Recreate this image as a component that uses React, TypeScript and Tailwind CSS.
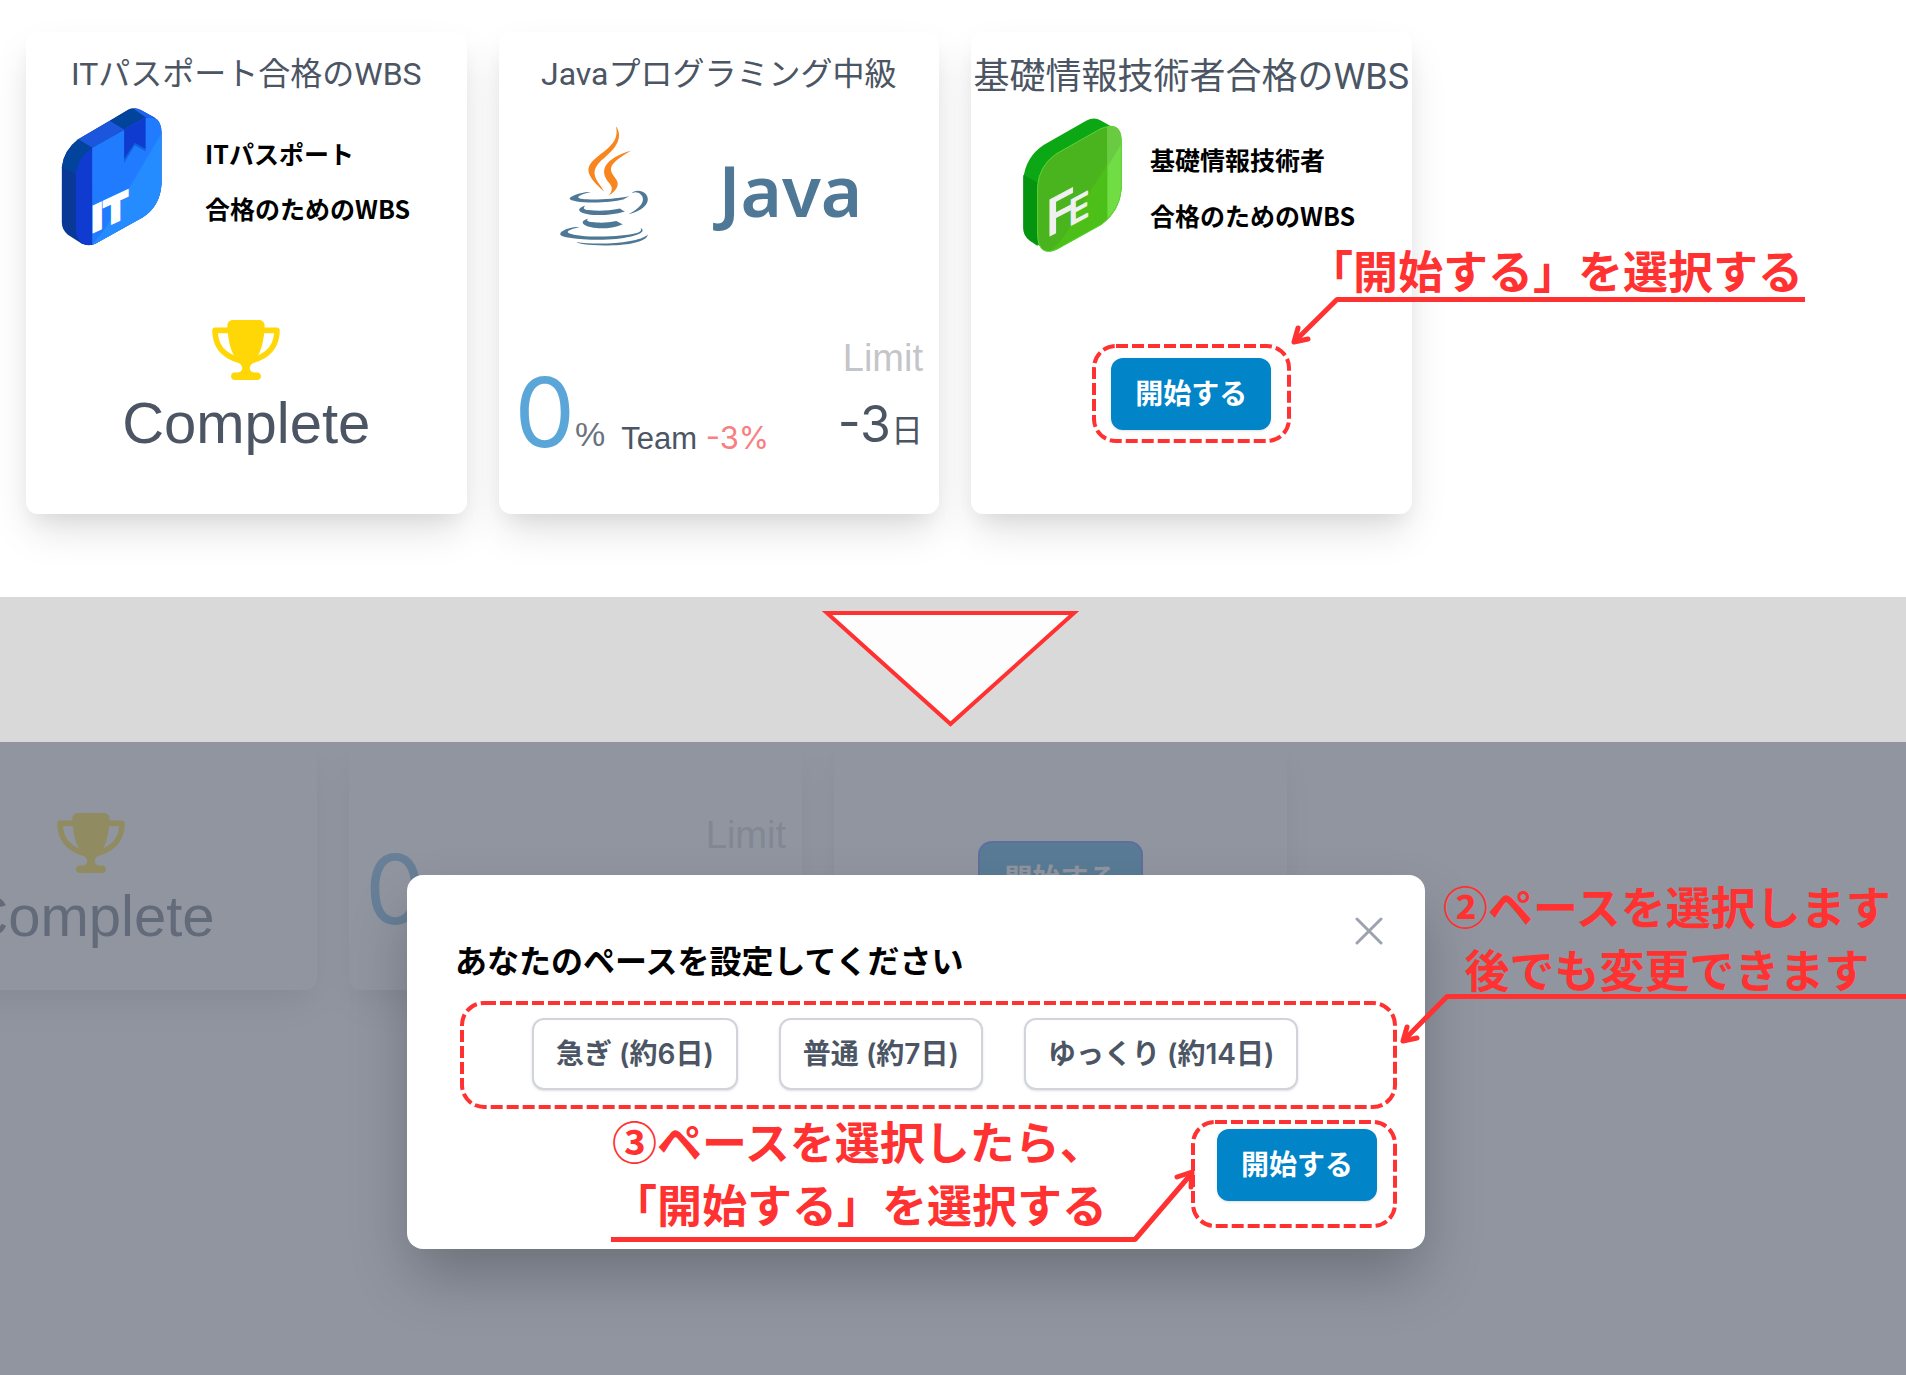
import type { ReactNode } from 'react'
import { FaTrophy } from 'react-icons/fa6'

function BookIcon() {
  return (
    <svg viewBox="185 262 302 414" className="h-[138px] w-[101px] shrink-0" aria-hidden="true">
      <path d="M187 440Q192 390 236 356L385 268Q405 258 424 268L466 291Q486 306 486 335V490Q482 556 430 590L290 668Q268 680 245 668L205 642Q187 628 187 605Z" fill="#0a3896" />
      <path d="M187 440Q192 390 236 356L280 382Q235 415 229 460Z" fill="#02439c" />
      <path d="M236 356L332 300L374 326L280 382Z" fill="#1b56dc" />
      <path d="M332 300L385 268Q393 263 402 264L438 290L374 326Z" fill="#02439c" />
      <path d="M402 264Q414 262 424 268L466 291L438 290Z" fill="#1d63f0" />
      <path d="M229 460Q235 410 280 380V672Q262 676 245 668Q229 650 229 620Z" fill="#103bd0" />
      <path d="M278 382L436 291Q486 282 486 335V490Q482 556 430 590L290 668L278 673Z" fill="#207bff" />
      <path d="M486 338V490Q482 556 430 590L290 668L278 673L318 622Z" fill="#248cff" />
      <path d="M374 326L438 290V392L406 374L374 426Z" fill="#0b63dc" />
      <path d="M374 326L438 290V384L406 366L374 414Z" fill="#103bd0" />
      <text transform="translate(274 637) skewY(-25)" fontSize="104" stroke="#fff" strokeWidth="8" className="fill-white font-['DejaVu_Sans',sans-serif] font-bold">IT</text>
    </svg>
  )
}

function FeIcon() {
  return (
    <svg viewBox="218 295 298 406" className="h-[135px] w-[99px] shrink-0" aria-hidden="true">
      <path d="M219 478Q226 412 280 376L408 303Q432 290 452 302L492 325L300 696L240 665Q219 650 219 625Z" fill="#0ca714" />
      <path d="M219 466L262 490V680L240 665Q219 650 219 625Z" fill="#059410" />
      <path d="M262 500Q266 440 316 404L450 328Q514 300 514 365V510Q508 575 455 615L320 690Q264 715 262 645Z" fill="#49b41d" />
      <path d="M514 372V510Q508 575 455 615L320 690Q310 696 300 697Q350 650 370 600Q395 555 430 500Z" fill="#4cc018" />
      <path d="M472 320Q514 314 514 365V510Q510 560 472 598Z" fill="#6fdd43" />
      <path d="M472 320Q514 314 514 365V372L472 442Z" fill="#6acb42" />
      <path d="M262 500Q266 440 316 404L450 328Q514 300 514 365V510Q508 575 455 615L320 690Q264 715 262 645Z" fill="none" stroke="#5ed335" strokeWidth="3" />
      <g stroke="#f0f0f0" strokeWidth="3" strokeLinejoin="round" className="fill-[#f0f0f0] font-['Inter',sans-serif] font-medium">
        <text transform="translate(287 656) skewY(-28)" fontSize="150">F</text>
        <text transform="translate(355 622) skewY(-28)" fontSize="106">E</text>
      </g>
    </svg>
  )
}

function JavaCup() {
  return (
    <svg viewBox="18 1 93 126" className="h-[120px] w-[89px] shrink-0" aria-hidden="true">
      <g fill="#4e7896">
        <path d="M47.617 98.12s-4.767 2.774 3.397 3.71c9.892 1.13 14.947.968 25.845-1.092 0 0 2.871 1.795 6.873 3.351-24.439 10.47-55.308-.607-36.115-5.969zm-2.988-13.665s-5.348 3.959 2.823 4.805c10.567 1.091 18.91 1.18 33.354-1.6 0 0 1.993 2.025 5.132 3.131-29.542 8.64-62.446.68-41.309-6.336z" />
        <path d="M102.123 108.229s3.529 2.91-3.888 5.159c-14.102 4.272-58.706 5.56-71.094.171-4.451-1.938 3.899-4.625 6.526-5.192 2.739-.593 4.303-.485 4.303-.485-4.953-3.487-32.013 6.85-13.743 9.815 49.821 8.076 90.817-3.637 77.896-9.468zM49.912 70.294s-22.686 5.389-8.033 7.348c6.188.828 18.518.638 30.011-.326 9.39-.789 18.813-2.474 18.813-2.474s-3.308 1.419-5.704 3.053c-23.042 6.061-67.544 3.238-54.731-2.958 10.832-5.239 19.644-4.643 19.644-4.643zm40.697 22.747c23.421-12.167 12.591-23.86 5.032-22.285-1.848.385-2.677.72-2.677.72s.688-1.079 2-1.543c14.953-5.255 26.451 15.503-4.823 23.725 0-.002.359-.327.468-.617z" />
        <path d="M52.214 126.021c22.476 1.437 57-.8 57.817-11.436 0 0-1.571 4.032-18.577 7.231-19.186 3.612-42.854 3.191-56.887.874 0 .001 2.875 2.381 17.647 3.331z" />
      </g>
      <g fill="#f8851d">
        <path d="M69.802 61.271c6.025 6.935-1.58 13.17-1.58 13.17s15.289-7.891 8.269-17.777c-6.559-9.215-11.587-13.792 15.635-29.58 0 .001-42.731 10.67-22.324 34.187z" />
        <path d="M76.491 1.587S89.459 14.563 64.188 34.51c-20.266 16.006-4.621 25.13-.007 35.559-11.831-10.673-20.509-20.07-14.688-28.815C58.041 28.42 81.722 22.195 76.491 1.587z" />
      </g>
    </svg>
  )
}

// dashed highlight, fills whatever box className gives it
function DashedBox({ className }: { className: string }) {
  return (
    <div className={`pointer-events-none absolute p-[2px] ${className}`}>
      <svg className="block size-full overflow-visible" aria-hidden="true">
        <rect width="100%" height="100%" rx="22" fill="none" stroke="#ff3131" strokeWidth="4" strokeDasharray="12 4" />
      </svg>
    </div>
  )
}

function Note({ className, children }: { className: string; children: ReactNode }) {
  return (
    <p className={`pointer-events-none absolute whitespace-nowrap font-['Noto_Sans_CJK_JP',sans-serif] text-[45px] leading-[63px] font-bold text-[#ff3131] ${className}`}>
      {children}
    </p>
  )
}

function StartButton({ className = '' }: { className?: string }) {
  return (
    <button
      type="button"
      className={`rounded-xl bg-[#0284c9] px-6 py-4 text-[28px] leading-10 font-bold whitespace-nowrap text-white shadow-sm ${className}`}
    >
      開始する
    </button>
  )
}

function Card({ className, children }: { className: string; children: ReactNode }) {
  return (
    <div className={`relative flex flex-col bg-white shadow-[0_20px_40px_-5px_rgba(0,0,0,0.13),0_10px_20px_-5px_rgba(0,0,0,0.06)] ${className}`}>
      {children}
    </div>
  )
}

function CardTitle({ className, children }: { className: string; children: ReactNode }) {
  return (
    <h3 className={`text-center font-['Roboto','Noto_Sans_CJK_JP',sans-serif] whitespace-nowrap ${className}`}>
      {children}
    </h3>
  )
}

function Complete() {
  return (
    <div className="mt-auto flex flex-col items-center">
      <FaTrophy className="h-[60px] w-[68px] text-[#ffd707]" />
      <p className="mt-2 font-['Liberation_Sans',sans-serif] text-[58px] leading-[70px]">Complete</p>
    </div>
  )
}

function Progress() {
  return (
    <div className="mt-auto flex items-end justify-between px-4">
      <div className="flex items-end">
        <span className="text-[96px] leading-[96px] text-[#5ba6d9]">0</span>
        <span className="font-['Liberation_Sans',sans-serif] text-[34px] leading-[52px] text-[#6b7280]">%</span>
        <span className="ml-4 font-['Liberation_Sans',sans-serif] text-[31px] leading-[42px]">
          Team <span className="font-['Inter',sans-serif] text-[#f88080]">-3%</span>
        </span>
      </div>
      <div className="flex flex-col items-end">
        <span className="font-['Liberation_Sans',sans-serif] text-[38px] leading-[74px] text-[#c4c5c9]">Limit</span>
        <span className="text-[50px] leading-[58px]">
          -3<span className="text-[32px]">日</span>
        </span>
      </div>
    </div>
  )
}

function PaceDialog() {
  const paces = ['急ぎ (約6日)', '普通 (約7日)', 'ゆっくり (約14日)']
  return (
    <div
      role="dialog"
      aria-labelledby="pace-title"
      className="relative w-[1018px] shrink-0 self-start rounded-2xl bg-white px-12 pt-16 pb-12 shadow-[0_30px_60px_-5px_rgba(0,0,0,0.25)]"
    >
      <button type="button" aria-label="閉じる" className="absolute top-[38px] right-[38px] p-1 text-[#9ca3af]">
        <svg viewBox="0 0 28 28" className="size-7" fill="none" stroke="currentColor" strokeWidth="3" strokeLinecap="round" aria-hidden="true">
          <path d="M2 2l24 24M26 2L2 26" />
        </svg>
      </button>
      <h2 id="pace-title" className="text-[32px] leading-[46px] font-bold text-black">
        あなたのペースを設定してください
      </h2>
      <div className="relative mt-4 -mr-5 ml-1 flex h-[108px] items-center gap-[41px] pb-[2px] pl-[73px]">
        {paces.map((pace) => (
          <button
            key={pace}
            type="button"
            className="rounded-xl border-2 border-[#d1d5db] bg-white px-[22px] py-[14px] text-[28px] leading-10 font-semibold whitespace-nowrap text-[#4b5563] shadow-sm"
          >
            {pace}
          </button>
        ))}
        <DashedBox className="inset-y-0 left-px right-0" />
      </div>
      <div className="mt-5 flex justify-end">
        <div className="relative">
          <StartButton />
          <DashedBox className="-top-[9px] -right-[20px] -bottom-[27px] -left-[26px]" />
        </div>
      </div>

      <Note className="top-[234px] left-[205px]">
        ③ペースを選択したら、
        <br />
        「開始する」を選択する
      </Note>
      <svg viewBox="0 0 586 76" className="pointer-events-none absolute top-[293px] left-[204px] h-[76px] w-[586px]" fill="none" stroke="#ff3131" strokeWidth="5" aria-hidden="true">
        <path d="M0 71.500H524L581 5" strokeLinejoin="bevel" />
        <path d="M566 9L581 4L580 19" strokeLinecap="round" strokeLinejoin="round" />
      </svg>

      <Note className="top-[-1px] left-[1036px] text-center">
        ②ペースを選択します
        <br />
        後でも変更できます
      </Note>
      <svg viewBox="0 0 508 52" className="pointer-events-none absolute top-[119px] left-[992px] h-[52px] w-[508px]" fill="none" stroke="#ff3131" strokeWidth="5" aria-hidden="true">
        <path d="M508 2.500H48L4 47" strokeLinejoin="bevel" />
        <path d="M8 33L4 47L18 44" strokeLinecap="round" strokeLinejoin="round" />
      </svg>
    </div>
  )
}

export default function App() {
  return (
    <main className="overflow-hidden bg-white font-['Inter','Noto_Sans_CJK_JP',sans-serif] text-[#4b5563]">
      <section className="grid grid-cols-4 gap-8 pt-8 pr-[22px] pb-[83px] pl-[26px]">
        <Card className="h-[482px] rounded-xl pt-[18px] pb-14">
          <CardTitle className="text-[32px] leading-[48px]">ITパスポート合格のWBS</CardTitle>
          <div className="flex h-[156px] items-center gap-[43px] pt-px pl-[35px]">
            <BookIcon />
            <p className="pt-2 font-['Noto_Sans_CJK_JP',sans-serif] text-[25px] leading-[55px] font-bold whitespace-nowrap text-black">
              ITパスポート
              <br />
              合格のためのWBS
            </p>
          </div>
          <Complete />
        </Card>

        <Card className="h-[482px] rounded-xl pt-[18px] pb-[54px]">
          <CardTitle className="text-[32px] leading-[48px]">Javaプログラミング中級</CardTitle>
          <div className="flex h-[156px] items-center gap-[70px] pt-5 pl-[61px]">
            <JavaCup />
            <p className="pt-2 font-['Noto_Sans',sans-serif] text-[71px] leading-[96px] font-semibold text-[#4e7896]">Java</p>
          </div>
          <Progress />
        </Card>

        <Card className="h-[482px] rounded-xl pt-[18px] pb-[84px]">
          <CardTitle className="text-[36px] leading-[54px]">基礎情報技術者合格のWBS</CardTitle>
          <div className="flex h-[156px] items-center gap-7 pt-[6px] pl-[52px]">
            <FeIcon />
            <p className="pt-1 font-['Noto_Sans_CJK_JP',sans-serif] text-[25px] leading-[56px] font-bold whitespace-nowrap text-black">
              基礎情報技術者
              <br />
              合格のためのWBS
            </p>
          </div>
          <div className="relative mt-auto self-center">
            <StartButton />
            <DashedBox className="-top-[14px] -right-5 -bottom-[13px] -left-[19px]" />
          </div>
          <Note className="top-[206px] left-[337px]">「開始する」を選択する</Note>
          <svg viewBox="0 0 516 52" className="pointer-events-none absolute top-[265px] left-[318px] h-[52px] w-[516px]" fill="none" stroke="#ff3131" strokeWidth="5" aria-hidden="true">
            <path d="M516 2.500H48L5 45" strokeLinejoin="bevel" />
            <path d="M9 31L5 45L19 42" strokeLinecap="round" strokeLinejoin="round" />
          </svg>
        </Card>
      </section>

      <div className="flex h-[145px] justify-center bg-[#d9d9d9] pt-3 pr-1">
        <svg viewBox="0 0 260 120" className="h-[120px] w-[260px]" aria-hidden="true">
          <path d="M6 4H253L129.500 115Z" fill="#fdfdfd" stroke="#ff3131" strokeWidth="4" />
        </svg>
      </div>

      <section className="relative min-h-[633px] overflow-hidden">
        <div className="mr-[134px] -ml-[136px] grid grid-cols-4 gap-8">
          <Card className="h-[248px] rounded-b-xl pb-[39px]">
            <Complete />
          </Card>
          <Card className="h-[248px] rounded-b-xl pb-[53px]">
            <Progress />
          </Card>
          <Card className="h-[248px] rounded-b-xl pb-[75px]">
            <StartButton className="mt-auto self-center opacity-85 ring-2 ring-[#1c50f2]" />
          </Card>
        </div>
        <div className="absolute inset-0 flex justify-center bg-[#6b7280]/75 pt-[133px] pr-[74px]">
          <PaceDialog />
        </div>
      </section>
    </main>
  )
}
